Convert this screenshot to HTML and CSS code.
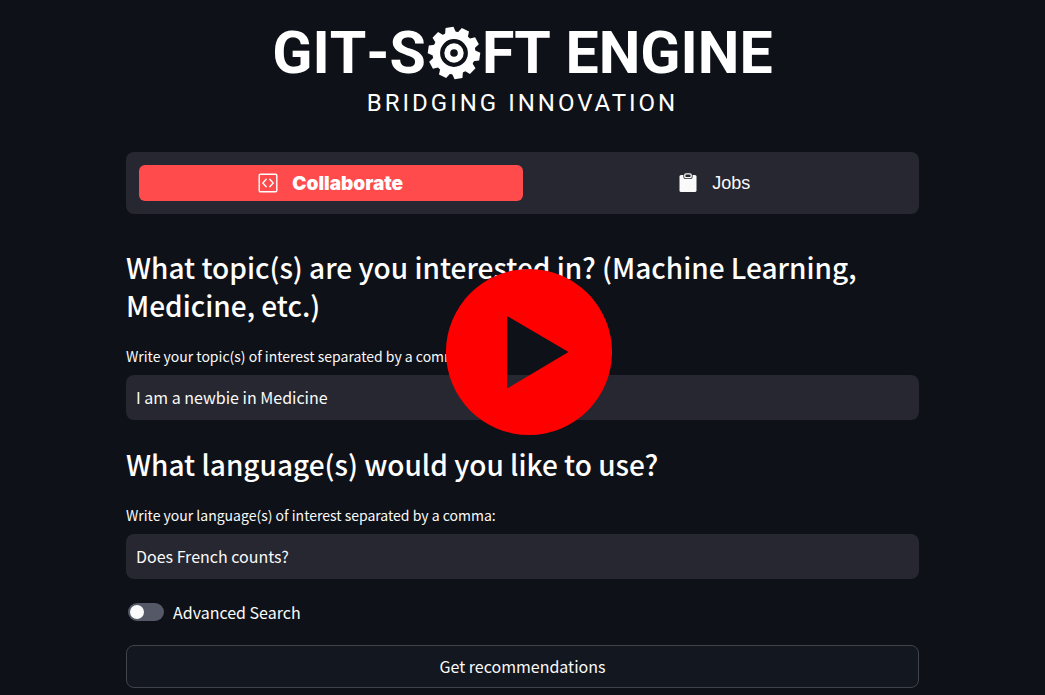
FILE: index.html
```
<!DOCTYPE html>
<html lang="en">
<head>
<meta charset="utf-8">
<meta name="viewport" content="width=device-width, initial-scale=1">
<title>Git-Soft Engine</title>
<link rel="stylesheet" href="styles.css">
</head>
<body>
<main class="page">
  <header class="brand">
    <h1 class="brand-name">
      <span>GIT-S</span>
      <svg class="gear" viewBox="-27 -27 54 54" role="img" aria-label="O">
        <defs><path id="tooth" d="M-5.5-20 L-4-26 H4 L5.5-20Z"/></defs>
        <g fill="#fff">
          <circle r="21.5"/>
          <use href="#tooth" transform="rotate(-10)"/>
          <use href="#tooth" transform="rotate(26)"/>
          <use href="#tooth" transform="rotate(62)"/>
          <use href="#tooth" transform="rotate(98)"/>
          <use href="#tooth" transform="rotate(134)"/>
          <use href="#tooth" transform="rotate(170)"/>
          <use href="#tooth" transform="rotate(206)"/>
          <use href="#tooth" transform="rotate(242)"/>
          <use href="#tooth" transform="rotate(278)"/>
          <use href="#tooth" transform="rotate(314)"/>
        </g>
        <circle r="11.8" fill="none" stroke="#0e1117" stroke-width="4.2"/>
        <circle r="3.8" fill="#0e1117"/>
      </svg>
      <span>FT ENGINE</span>
    </h1>
    <p class="tagline">BRIDGING INNOVATION</p>
  </header>

  <nav class="tabs" aria-label="Sections">
    <a class="tab tab-active" href="#collaborate" aria-current="page">
      <svg class="tab-icon" viewBox="0 0 20 20" fill="none" stroke="#fff" stroke-linejoin="round" stroke-linecap="round">
        <rect x="1.2" y="1.2" width="17.6" height="17.6" rx="1.2" stroke-width="1.4"/>
        <path d="M8.2 6.2 4.8 10l3.4 3.8M11.8 6.2 15.2 10l-3.4 3.8" stroke-width="1.4"/>
      </svg>
      <span>Collaborate</span>
    </a>
    <a class="tab" href="#jobs">
      <svg class="tab-icon" viewBox="0 0 20 20">
        <rect x="1.5" y="2" width="17" height="17" rx="1.6" fill="#fafafa"/>
        <rect x="5.4" y="0" width="9.2" height="6" rx="2" fill="#262730"/>
        <rect x="6.8" y="0.8" width="6.4" height="3.8" rx="1.2" fill="none" stroke="#fafafa" stroke-width="1.3"/>
      </svg>
      <span>Jobs</span>
    </a>
  </nav>

  <form class="search">
    <section class="question">
      <h2 class="title">What topic(s) are you interested in? (Machine Learning, Medicine, etc.)</h2>
      <label class="label" for="topics">Write your topic(s) of interest separated by a comma:</label>
      <input class="field" id="topics" type="text" value="I am a newbie in Medicine">
    </section>
    <section class="question">
      <h2 class="title">What language(s) would you like to use?</h2>
      <label class="label" for="languages">Write your language(s) of interest separated by a comma:</label>
      <input class="field" id="languages" type="text" value="Does French counts?">
    </section>
    <label class="switch">
      <input class="switch-input" type="checkbox" role="switch">
      <span>Advanced Search</span>
    </label>
    <button class="submit" type="button">Get recommendations</button>
  </form>

  <button class="play" type="button" aria-label="Play video">
    <svg class="play-icon" viewBox="0 0 166 166">
      <path fill="#f00" fill-rule="evenodd" d="M83 0a83 83 0 1 1 0 166a83 83 0 1 1 0-166ZM61 47V119.500L122.500 83Z"/>
    </svg>
  </button>
</main>
</body>
</html>
```
FILE: styles.css
```
* {
  box-sizing: border-box;
}

body {
  margin: 0;
  background: #0e1117;
  color: #fafafa;
  font-family: "Noto Sans CJK JP", "Noto Sans", sans-serif;
  font-size: 16px;
}

.page {
  position: relative;
  padding: 23px 126px 7px;
}

.brand {
  display: flex;
  flex-direction: column;
  align-items: center;
  color: #fff;
  font-family: Roboto, sans-serif;
}

.brand-name {
  display: flex;
  align-items: center;
  gap: 1px;
  margin: 0;
  font-size: 59px;
  font-weight: 700;
  font-kerning: none;
  line-height: 60px;
  white-space: nowrap;
}

.gear {
  width: 54px;
  height: 54px;
}

.tagline {
  margin: 5px 0 0;
  font-size: 24px;
  font-weight: 400;
  line-height: 30px;
  letter-spacing: 3px;
}

.tabs {
  display: grid;
  grid-template-columns: 1fr 1fr;
  margin-top: 34px;
  padding: 13px;
  border-radius: 8px;
  background: #262730;
  font-family: "Liberation Sans", Arial, sans-serif;
  font-size: 18px;
}

.tab {
  display: flex;
  align-items: center;
  justify-content: center;
  gap: 14px;
  height: 36px;
  border-radius: 6px;
  color: #fafafa;
  text-decoration: none;
}

.tab-active {
  background: #ff4b4b;
  color: #fff;
  font-family: Inter, sans-serif;
  font-size: 19px;
  font-weight: 900;
}

.tab-icon {
  width: 20px;
  height: 20px;
}

.search {
  display: flex;
  flex-direction: column;
}

.question {
  display: flex;
  flex-direction: column;
  margin-top: 34px;
}

.question + .question {
  margin-top: 25px;
}

.title {
  margin: 0 0 20px;
  color: #fff;
  font-size: 28px;
  font-weight: 500;
  line-height: 38px;
}

.label {
  margin-bottom: 7px;
  font-size: 14px;
  line-height: 24px;
}

.field {
  width: 100%;
  height: 45px;
  padding: 0 10px 2px;
  border: 0;
  border-radius: 8px;
  background: #262730;
  color: #fafafa;
  font: inherit;
}

.switch {
  display: flex;
  align-items: center;
  align-self: flex-start;
  gap: 9px;
  margin: 21px 0 21px 2px;
  line-height: 24px;
}

.switch-input {
  appearance: none;
  display: flex;
  align-items: center;
  width: 36px;
  height: 18px;
  margin: 0;
  padding: 0 2px;
  border-radius: 9px;
  background: #555867;
}

.switch-input::before {
  content: "";
  width: 14px;
  height: 14px;
  border-radius: 50%;
  background: #fafafa;
}

.switch-input:checked {
  justify-content: flex-end;
  background: #ff4b4b;
}

.submit {
  height: 43px;
  padding: 0 10px 2px;
  border: 1px solid #41434b;
  border-radius: 8px;
  background: #13171f;
  color: #fafafa;
  font: inherit;
}

.play {
  position: absolute;
  top: 269px;
  left: calc(50% - 77px);
  width: 166px;
  height: 166px;
  padding: 0;
  border: 0;
  border-radius: 50%;
  background: none;
}

.play-icon {
  display: block;
  width: 100%;
  height: 100%;
}
```
